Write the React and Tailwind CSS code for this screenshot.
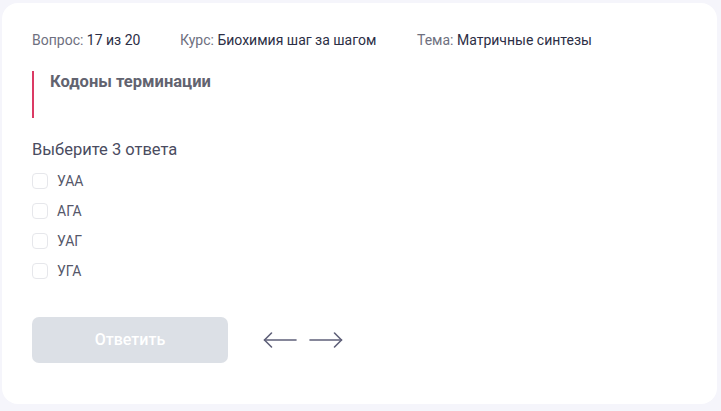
import React from "react";

function Arrow({ dir }) {
  return (
    <svg width="34" height="18" viewBox="0 0 34 18" fill="none" stroke="#5f6079" strokeWidth="1.6" strokeLinecap="round" strokeLinejoin="round">
      {dir === "left" ? (
        <>
          <path d="M1.5 9 H33" />
          <path d="M8.5 2 L1.5 9 L8.5 16" />
        </>
      ) : (
        <>
          <path d="M1 9 H32.5" />
          <path d="M25.5 2 L32.5 9 L25.5 16" />
        </>
      )}
    </svg>
  );
}

export default function App() {
  const opts = ["УАА", "АГА", "УАГ", "УГА"];
  return (
    <div className="w-[721px] h-[411px] bg-[#f5f5fb] pt-[3px] pl-[2px] pr-[4px] pb-[7px]" style={{ fontFamily: "Roboto, 'Noto Sans', sans-serif" }}>
      <div className="h-full bg-white rounded-[16px] pl-[30px] pt-[27px]">
        <div className="flex items-center text-[14px] leading-[20px] text-[#6e7080]">
          <span className="w-[148px]">Вопрос: <span className="text-[#2c2e45]">17 из 20</span></span>
          <span className="w-[237px]">Курс: <span className="text-[#2c2e45]">Биохимия шаг за шагом</span></span>
          <span>Тема: <span className="text-[#2c2e45]">Матричные синтезы</span></span>
        </div>
        <div className="mt-[21px] border-l-2 border-[#db3a64] h-[47px] pl-[16px] pt-[0px]">
          <div className="text-[16.5px] leading-[22px] font-bold text-[#62636f]">Кодоны терминации</div>
        </div>
        <div className="mt-[22px] text-[16.5px] leading-[20px] text-[#4a4c60]">Выберите 3 ответа</div>
        <div className="mt-[11px] flex flex-col gap-[10px]">
          {opts.map((o) => (
            <div key={o} className="flex items-center h-[20px]">
              <div className="w-[16px] h-[16px] border border-[#e6e7eb] rounded-[4px] bg-white" />
              <span className="ml-[9px] text-[14px] leading-[20px] text-[#55576a]">{o}</span>
            </div>
          ))}
        </div>
        <div className="mt-[36px] flex items-center">
          <button className="w-[196px] h-[46px] rounded-[7px] bg-[#dce0e6] text-white text-[16px] font-medium">Ответить</button>
          <div className="ml-[35px] flex items-center gap-[12px]">
            <Arrow dir="left" />
            <Arrow dir="right" />
          </div>
        </div>
      </div>
    </div>
  );
}
